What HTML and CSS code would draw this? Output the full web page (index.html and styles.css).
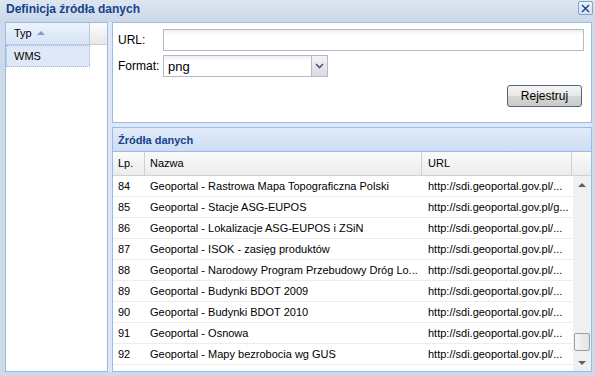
FILE: index.html
```html
<!DOCTYPE html>
<html lang="pl">
<head>
    <meta charset="UTF-8">
    <title>Definicja źródła danych</title>
    <link rel="stylesheet" href="styles.css">
</head>
<body>
    <div class="window">
        <div class="win-header">
            <span class="win-title">Definicja źródła danych</span>
            <div class="win-close">
                <svg width="9" height="9" viewBox="0 0 9 9">
                    <path d="M1 1L8 8M8 1L1 8" stroke="#15428b" stroke-width="1.4" fill="none"/>
                </svg>
            </div>
        </div>
        <div class="win-body">
            <div class="panel types">
                <div class="type-head">
                    <div class="hcell sorted">Typ <span class="sort-up"></span></div>
                    <div class="hcell filler"></div>
                </div>
                <div class="type-row selected">WMS</div>
            </div>
            <div class="main">
                <div class="panel form">
                    <div class="field">
                        <label>URL:</label>
                        <input class="text url-input" type="text">
                    </div>
                    <div class="field">
                        <label>Format:</label>
                        <div class="combo">
                            <input class="text" type="text" value="png">
                            <span class="trigger">
                                <svg width="9" height="6" viewBox="0 0 9 6"><path d="M1 1L4.5 4.5L8 1" stroke="#3b5a8c" stroke-width="1.6" fill="none"/></svg>
                            </span>
                        </div>
                    </div>
                    <div class="actions">
                        <button class="btn">Rejestruj</button>
                    </div>
                </div>
                <div class="panel sources">
                    <div class="panel-title">Źródła danych</div>
                    <div class="cols">
                        <div class="col c-lp">Lp.</div>
                        <div class="col c-name">Nazwa</div>
                        <div class="col c-url">URL</div>
                        <div class="col c-end"></div>
                    </div>
                    <div class="grid-body">
                        <div class="rows">
                            <div class="row"><div class="c-lp">84</div><div class="c-name">Geoportal - Rastrowa Mapa Topograficzna Polski</div><div class="c-url">http://sdi.geoportal.gov.pl/...</div></div>
                            <div class="row"><div class="c-lp">85</div><div class="c-name">Geoportal - Stacje ASG-EUPOS</div><div class="c-url">http://sdi.geoportal.gov.pl/g...</div></div>
                            <div class="row"><div class="c-lp">86</div><div class="c-name">Geoportal - Lokalizacje ASG-EUPOS i ZSiN</div><div class="c-url">http://sdi.geoportal.gov.pl/...</div></div>
                            <div class="row"><div class="c-lp">87</div><div class="c-name">Geoportal - ISOK - zasięg produktów</div><div class="c-url">http://sdi.geoportal.gov.pl/...</div></div>
                            <div class="row"><div class="c-lp">88</div><div class="c-name">Geoportal - Narodowy Program Przebudowy Dróg Lo...</div><div class="c-url">http://sdi.geoportal.gov.pl/...</div></div>
                            <div class="row"><div class="c-lp">89</div><div class="c-name">Geoportal - Budynki BDOT 2009</div><div class="c-url">http://sdi.geoportal.gov.pl/...</div></div>
                            <div class="row"><div class="c-lp">90</div><div class="c-name">Geoportal - Budynki BDOT 2010</div><div class="c-url">http://sdi.geoportal.gov.pl/...</div></div>
                            <div class="row"><div class="c-lp">91</div><div class="c-name">Geoportal - Osnowa</div><div class="c-url">http://sdi.geoportal.gov.pl/...</div></div>
                            <div class="row"><div class="c-lp">92</div><div class="c-name">Geoportal - Mapy bezrobocia wg GUS</div><div class="c-url">http://sdi.geoportal.gov.pl/...</div></div>
                        </div>
                        <div class="scrollbar">
                            <div class="arrow up"></div>
                            <div class="track"><div class="thumb"></div></div>
                            <div class="arrow down"></div>
                        </div>
                    </div>
                </div>
            </div>
        </div>
    </div>
</body>
</html>
```

FILE: styles.css
```css
body {
    margin: 0;
    font-family: "Liberation Sans", Arial, sans-serif;
    font-size: 12px;
    color: #000;
}
.window {
    width: 595px;
    height: 376px;
    background-color: #cddaea;
    display: flex;
    flex-direction: column;
}
.win-header {
    height: 22px;
    flex: none;
    display: flex;
    align-items: center;
    justify-content: space-between;
    padding: 0 2px 0 6px;
    background: linear-gradient(#dce6f2, #cbd8e9);
}
.win-title {
    font-weight: bold;
    font-size: 12px;
    color: #15428b;
    margin-top: -4px;
}
.win-close {
    width: 13px;
    height: 12px;
    margin-top: -6px;
    border: 1px solid #86a3cb;
    border-radius: 2px;
    background: linear-gradient(#e9f1fb, #d3e2f5);
    display: flex;
    justify-content: center;
    align-items: center;
}
.win-body {
    flex: 1;
    display: flex;
    gap: 4px;
    margin: 0 3px 4px 5px;
    background-color: #dfe8f6;
}
.panel {
    border: 1px solid #99bbe8;
    background-color: white;
    box-sizing: border-box;
}
.types {
    width: 103px;
}
.type-head {
    display: flex;
    height: 22px;
}
.hcell {
    box-sizing: border-box;
    border-right: 1px solid #d0d0d0;
    border-bottom: 1px solid #d0d0d0;
    background: linear-gradient(#fcfcfc, #e8e8e8);
    font-size: 11px;
    line-height: 21px;
    padding-left: 8px;
}
.hcell.sorted {
    width: 84px;
    background: linear-gradient(#ecf3fc, #d6e4f5);
    border-color: #b7cbe6;
}
.hcell.filler {
    flex: 1;
    border-right: none;
}
.sort-up {
    display: inline-block;
    width: 0;
    height: 0;
    margin-left: 2px;
    vertical-align: 2px;
    border-left: 4px solid transparent;
    border-right: 4px solid transparent;
    border-bottom: 4px solid #7d9bcb;
}
.type-row {
    width: 84px;
    height: 22px;
    box-sizing: border-box;
    border: 1px dotted #9fb6e4;
    background-color: #dfe8f6;
    font-size: 11px;
    line-height: 20px;
    padding-left: 7px;
}
.main {
    flex: 1;
    display: flex;
    flex-direction: column;
    gap: 4px;
}
.form {
    height: 101px;
    flex: none;
    padding: 6px 7px 0 5px;
}
.field {
    display: flex;
    align-items: center;
    margin-bottom: 4px;
}
.field label {
    width: 45px;
}
.text {
    box-sizing: border-box;
    height: 22px;
    margin: 0;
    border: 1px solid #b5b8c8;
    background: linear-gradient(#efefef, white 5px);
    font-family: "Liberation Sans", Arial, sans-serif;
    font-size: 13px;
    padding: 0 4px;
    outline: none;
}
.url-input {
    flex: 1;
}
.combo {
    display: flex;
    width: 165px;
}
.combo .text {
    flex: 1;
    min-width: 0;
    border-right: none;
}
.trigger {
    width: 17px;
    height: 22px;
    box-sizing: border-box;
    border: 1px solid #b5b8c8;
    background: linear-gradient(#f3f3f3, #dcdcdc);
    display: flex;
    justify-content: center;
    align-items: center;
}
.actions {
    display: flex;
    justify-content: flex-end;
    margin-top: 8px;
    padding-right: 2px;
}
.btn {
    width: 75px;
    height: 22px;
    border: 1px solid #4e6480;
    border-radius: 3px;
    background: linear-gradient(#f5f5f5, #e6e6e6 50%, #d6d6d6 51%, #cbcbcb);
    font-family: "Liberation Sans", Arial, sans-serif;
    font-size: 12px;
    padding: 0;
    color: #000;
}
.sources {
    flex: 1;
    display: flex;
    flex-direction: column;
    overflow: hidden;
}
.panel-title {
    height: 23px;
    flex: none;
    border-bottom: 1px solid #99bbe8;
    background: linear-gradient(#e1ebf8, #cddef3);
    color: #15428b;
    font-weight: bold;
    font-size: 11px;
    line-height: 24px;
    padding-left: 5px;
}
.cols {
    display: flex;
    height: 24px;
    flex: none;
    box-sizing: border-box;
    border-bottom: 1px solid #d0d0d0;
    background: linear-gradient(#fbfbfb, #ececec);
    font-size: 11px;
    line-height: 23px;
}
.col {
    box-sizing: border-box;
    border-right: 1px solid #d0d0d0;
}
.c-lp {
    width: 32px;
    padding-left: 5px;
    box-sizing: border-box;
}
.c-name {
    width: 277px;
    padding-left: 5px;
    box-sizing: border-box;
}
.c-url {
    width: 150px;
    padding-left: 6px;
    box-sizing: border-box;
}
.col.c-end {
    flex: 1;
    border-right: none;
}
.grid-body {
    flex: 1;
    display: flex;
    min-height: 0;
}
.rows {
    flex: 1;
}
.row {
    display: flex;
    height: 21px;
    box-sizing: border-box;
    border-bottom: 1px solid #ededed;
    font-size: 11px;
    line-height: 20px;
}
.row div {
    white-space: nowrap;
}
.scrollbar {
    width: 18px;
    display: flex;
    flex-direction: column;
    background-color: #f0f0f0;
}
.arrow {
    height: 17px;
    display: flex;
    justify-content: center;
    align-items: center;
}
.arrow::after {
    content: "";
    border-left: 4px solid transparent;
    border-right: 4px solid transparent;
}
.arrow.up::after {
    border-bottom: 4px solid #606060;
}
.arrow.down::after {
    border-top: 4px solid #606060;
}
.track {
    flex: 1;
    display: flex;
    flex-direction: column;
    justify-content: flex-end;
    padding: 0 1px 3px 1px;
}
.thumb {
    height: 16px;
    border: 1px solid #9e9e9e;
    border-radius: 2px;
    background: linear-gradient(to right, #f6f6f6, #e2e2e2);
}
```
